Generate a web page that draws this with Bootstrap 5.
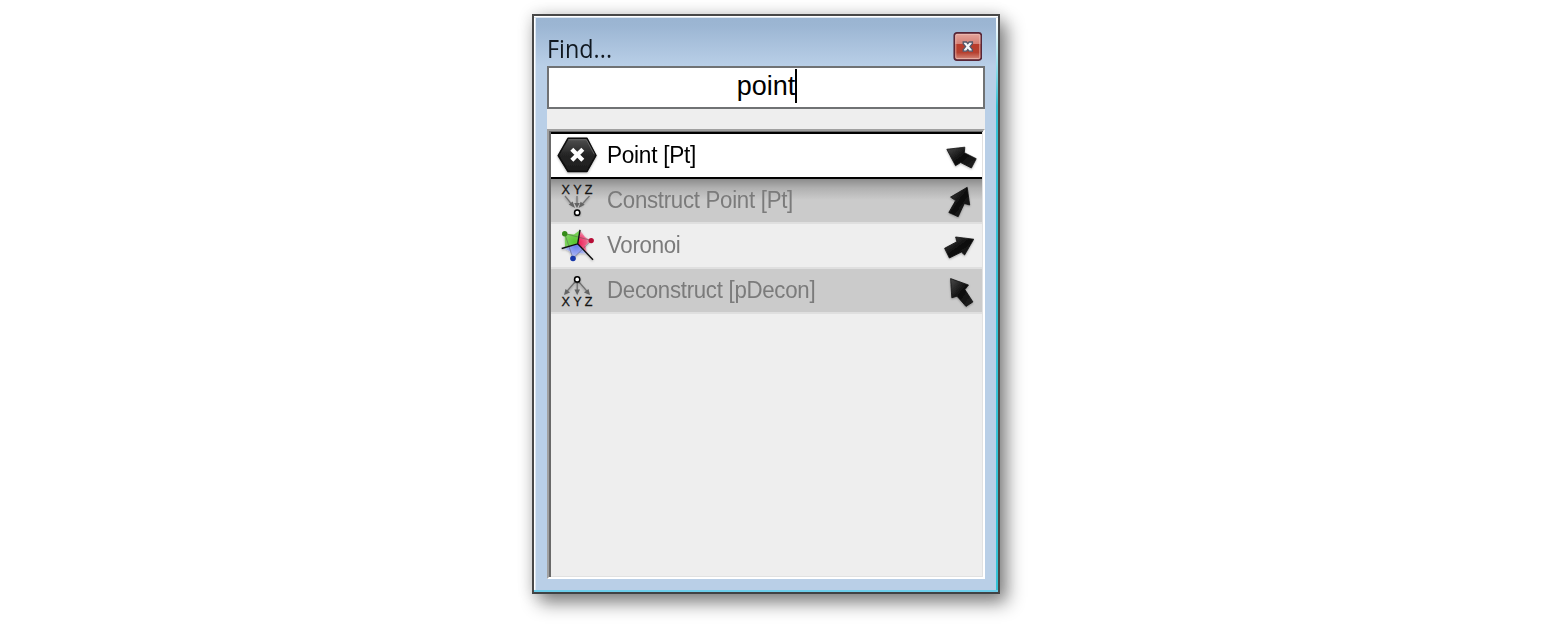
<!DOCTYPE html>
<html lang="en">
<head>
<meta charset="utf-8">
<meta name="viewport" content="width=device-width, initial-scale=1">
<title>Find</title>
<link rel="stylesheet" href="https://cdn.jsdelivr.net/npm/bootstrap@5.3.0/dist/css/bootstrap.min.css">
<style>
body{background:#fff;font-family:"Liberation Sans",Arial,sans-serif;height:631px;overflow:hidden}
.find-window{width:468px;height:580px;margin:14px 0 0 532px;border:2px solid #484848;border-bottom-color:#404244;padding:2px 13px 13px;
background:linear-gradient(#9ab4d1 0,#9cb6d3 10px,#b9cfe7 50px,#b9cfe7);
box-shadow:7px 9px 17px rgba(0,0,0,.47),0 0 15px rgba(0,0,0,.14);position:relative}
.find-window::before{content:"";position:absolute;inset:0;pointer-events:none;
background:linear-gradient(#fff,#fff) 0 0/100% 1px no-repeat,linear-gradient(#dbe5f0,#dbe5f0) 0 1px/100% 1px no-repeat,
linear-gradient(#6dcdea,#6dcdea) 0 100%/100% 2px no-repeat,
linear-gradient(#fff,#fff) 0 0/1px 100% no-repeat,linear-gradient(#dce7f3,#dce7f3) 1px 0/1px 100% no-repeat,
linear-gradient(#fff 0,#e8f5fa 15px,#36c2d6 90px,#36c2d6) 100% 0/2px 100% no-repeat}
.title-row{height:48px;padding:12px 3px 0 0}
.title-text{font:25px/36px "Open Sans","Noto Sans",sans-serif;color:#101820;transform:scaleX(.935);transform-origin:0 0}
.find-input{height:43px;border:2px solid #707274;background:#fff;color:#000;font-size:27px;line-height:37px;padding-left:2px}
.caret{width:2px;height:34px;background:#000;margin-top:1px}
.find-panel{background:#eee;height:470px;padding-top:20px}
.result-list{height:450px;border:2px solid #a0a0a0;border-right-color:#fff;border-bottom-color:#fff;box-shadow:inset 2px 1px #696969,inset -1px -1px #e1e1e1;padding:1px 1px 1px 2px}
.result{height:45px;padding:0 4px 0 5px;color:#7b7b7b;font-size:23px;line-height:43px;border-bottom:2px solid #dfdfdf}
.result svg{flex:none}
.result.active-row{height:47px;background:#fff;color:#000;border-top:2px solid #000;border-bottom-color:#000}
.result.shade{background:#cbcbcb}
.result.under{background:linear-gradient(#8c8c8c,#b0b0b0 9px,#cbcbcb 21px)}
.result-name{margin-left:9px;letter-spacing:-.3px;white-space:nowrap;transform:scaleX(.968);transform-origin:0 0}
.active-row .result-name{transform:scaleX(.985)}
</style>
<script src="https://cdn.jsdelivr.net/npm/bootstrap@5.3.0/dist/js/bootstrap.bundle.min.js"></script>
</head>
<body>
<svg width="0" height="0" class="position-absolute" aria-hidden="true">
<defs>
<linearGradient id="hexFill" x2="0" y2="1"><stop stop-color="#505050"/><stop offset=".5" stop-color="#252525"/><stop offset="1" stop-color="#1c1c1c"/></linearGradient>
<linearGradient id="arrowFill" x2="1" y2="1"><stop stop-color="#4a4a4a"/><stop offset=".5" stop-color="#0c0c0c"/><stop offset="1" stop-color="#262626"/></linearGradient>
<linearGradient id="closeFill" x2="0" y2="1"><stop stop-color="#e6a79e"/><stop offset=".4" stop-color="#d58075"/><stop offset=".42" stop-color="#b93c2b"/><stop offset=".72" stop-color="#b6402f"/><stop offset="1" stop-color="#d99285"/></linearGradient>
<radialGradient id="greenFill" gradientUnits="userSpaceOnUse" cx="19" cy="16" r="18"><stop stop-color="#57c72f"/><stop offset=".65" stop-color="#82d464"/><stop offset="1" stop-color="#9ade82" stop-opacity=".2"/></radialGradient>
<radialGradient id="redFill" gradientUnits="userSpaceOnUse" cx="22" cy="17" r="16"><stop stop-color="#ee1b54"/><stop offset=".5" stop-color="#f05b85"/><stop offset="1" stop-color="#f8a5ba" stop-opacity="0"/></radialGradient>
<radialGradient id="blueFill" gradientUnits="userSpaceOnUse" cx="20" cy="19" r="15"><stop stop-color="#6379ea"/><stop offset=".6" stop-color="#9ba9f2"/><stop offset="1" stop-color="#b2bdf5" stop-opacity="0"/></radialGradient>
<filter id="soft" x="-30%" y="-30%" width="160%" height="160%"><feDropShadow dx="0" dy="1" stdDeviation="1.2" flood-color="#000" flood-opacity=".3"/></filter>
</defs>
</svg>

<main class="find-window">
  <header class="title-row d-flex justify-content-between">
    <div class="title-text">Find...</div>
    <svg class="mt-0" width="29" height="31" viewBox="0 -2 29 31">
      <rect x="1.3" y=".9" width="27" height="27.2" rx="2.6" fill="url(#closeFill)" stroke="#572637" stroke-width="1.7"/>
      <rect x="2.8" y="2.5" width="24" height="24" rx="1.2" fill="none" stroke="#edbcb3" stroke-opacity=".75"/>
      <path d="M10.2 10h3.3l1.3 1.6 1.3-1.6h3.3v1.7l-2.4 2.9 2.4 2.9v1.7h-3.3l-1.3-1.6-1.3 1.6h-3.3v-1.7l2.4-2.9-2.4-2.9z" fill="#f4f5f7" stroke="#535769" stroke-width="1.3"/>
    </svg>
  </header>
  <div class="find-input d-flex justify-content-center"><span>point</span><span class="caret"></span></div>
  <section class="find-panel">
    <div class="result-list">
      <div class="result active-row d-flex align-items-center">
        <svg width="42" height="40" viewBox="0 0 42 40">
          <path d="M12 2.3H31L40 19.5 31 35.5H12L2.2 19.5z" fill="url(#hexFill)" stroke="#080808" stroke-width="1.5" stroke-linejoin="round" filter="url(#soft)"/>
          <path d="M12.3 3.8h18.2l7.8 14.5" fill="none" stroke="#777" stroke-width=".7"/>
          <path d="M15.8 13.3l11 11M26.8 13.3l-11 11" stroke="#fff" stroke-width="4.2"/>
        </svg>
        <span class="result-name me-auto">Point [Pt]</span>
        <svg width="36" height="36" viewBox="0 0 36 36"><path d="M4.8 11.3L22.8 9.2 22.3 14.7 34.2 20.7 29.4 30 18.7 24.5 13.5 27.7z" fill="url(#arrowFill)" stroke="#111" stroke-width=".8" filter="url(#soft)"/></svg>
      </div>
      <div class="result shade under d-flex align-items-center">
        <svg width="42" height="40" viewBox="0 0 42 40" font-family="Liberation Sans" font-size="12.6">
          <g fill="#151515" stroke="#151515" stroke-width=".3"><text x="5.5" y="13">X</text><text x="17.2" y="13">Y</text><text x="28.8" y="13">Z</text></g>
          <path d="M9 15l8 10M21 15v10M33.5 15l-9 10" stroke="#727272" stroke-width="1.3" filter="url(#soft)"/>
          <path d="M19 27l-6.3-3.5 4-3zM21 27l-2.8-5h5.6zM22.6 27l2-6.3 4 3z" fill="#646464"/>
          <circle cx="21.2" cy="31.7" r="2.6" fill="#fff" stroke="#000" stroke-width="1.5" filter="url(#soft)"/>
        </svg>
        <span class="result-name me-auto">Construct Point [Pt]</span>
        <svg width="36" height="36" viewBox="0 0 36 36"><path d="M25.2 4.3L27.7 22 22.3 20.5 16.2 33.7 6.8 29.5 13.6 17.6 8.6 14.1z" fill="url(#arrowFill)" stroke="#111" stroke-width=".8" filter="url(#soft)"/></svg>
      </div>
      <div class="result d-flex align-items-center">
        <svg width="42" height="40" viewBox="0 0 42 40">
          <g filter="url(#soft)">
            <path d="M8.7 7.5L18 8.5 24 4 21.7 17.8 9 21.5z" fill="url(#greenFill)"/>
            <path d="M24 4l5 7 6.3 3.5-6 5 2 8.5-9.6-10.2z" fill="url(#redFill)"/>
            <path d="M21.7 17.8L31 28l-8-1-6 5.5L13.5 25 7 22.2z" fill="url(#blueFill)"/>
            <path d="M8.7 7.5L35.3 14.5 17 32.5z" fill="none" stroke="#555" stroke-opacity=".6" stroke-width=".8"/>
            <path d="M24 3.8L21.7 17.8 5.7 22.5M21.7 17.8L37 33.8" fill="none" stroke="#111" stroke-width="1.4"/>
          </g>
          <circle cx="8.7" cy="7.7" r="2.7" fill="#358b18"/><circle cx="35.2" cy="14.6" r="2.7" fill="#b70c36"/><circle cx="17" cy="32.5" r="2.8" fill="#1737a9"/>
        </svg>
        <span class="result-name me-auto">Voronoi</span>
        <svg width="36" height="36" viewBox="0 0 36 36"><path d="M31.7 11.2L13.6 9 14.9 13.7 2.6 20.3 7.4 30 19.4 24.1 22.6 27z" fill="url(#arrowFill)" stroke="#111" stroke-width=".8" filter="url(#soft)"/></svg>
      </div>
      <div class="result shade d-flex align-items-center">
        <svg width="42" height="40" viewBox="0 0 42 40" font-family="Liberation Sans" font-size="12.6">
          <path d="M19 11L9.5 22M21.2 11v11M23 11l9.5 11" stroke="#727272" stroke-width="1.3" filter="url(#soft)"/>
          <path d="M8 24l1.5-6 4.5 3.5zM21.2 24l-2.8-5.5H24zM34 24l-6-2.5 4.5-3.5z" fill="#646464"/>
          <circle cx="21.2" cy="8.4" r="2.6" fill="#fff" stroke="#000" stroke-width="1.5" filter="url(#soft)"/>
          <g fill="#151515" stroke="#151515" stroke-width=".3"><text x="5.5" y="34.8">X</text><text x="17.2" y="34.8">Y</text><text x="28.8" y="34.8">Z</text></g>
        </svg>
        <span class="result-name me-auto">Deconstruct [pDecon]</span>
        <svg width="36" height="36" viewBox="0 0 36 36"><path d="M8.6 5.6L26.5 12 22.9 16.6 30.9 28.9 24 33.4 15 23.2 9.8 24.8z" fill="url(#arrowFill)" stroke="#111" stroke-width=".8" filter="url(#soft)"/></svg>
      </div>
    </div>
  </section>
</main>
</body>
</html>
